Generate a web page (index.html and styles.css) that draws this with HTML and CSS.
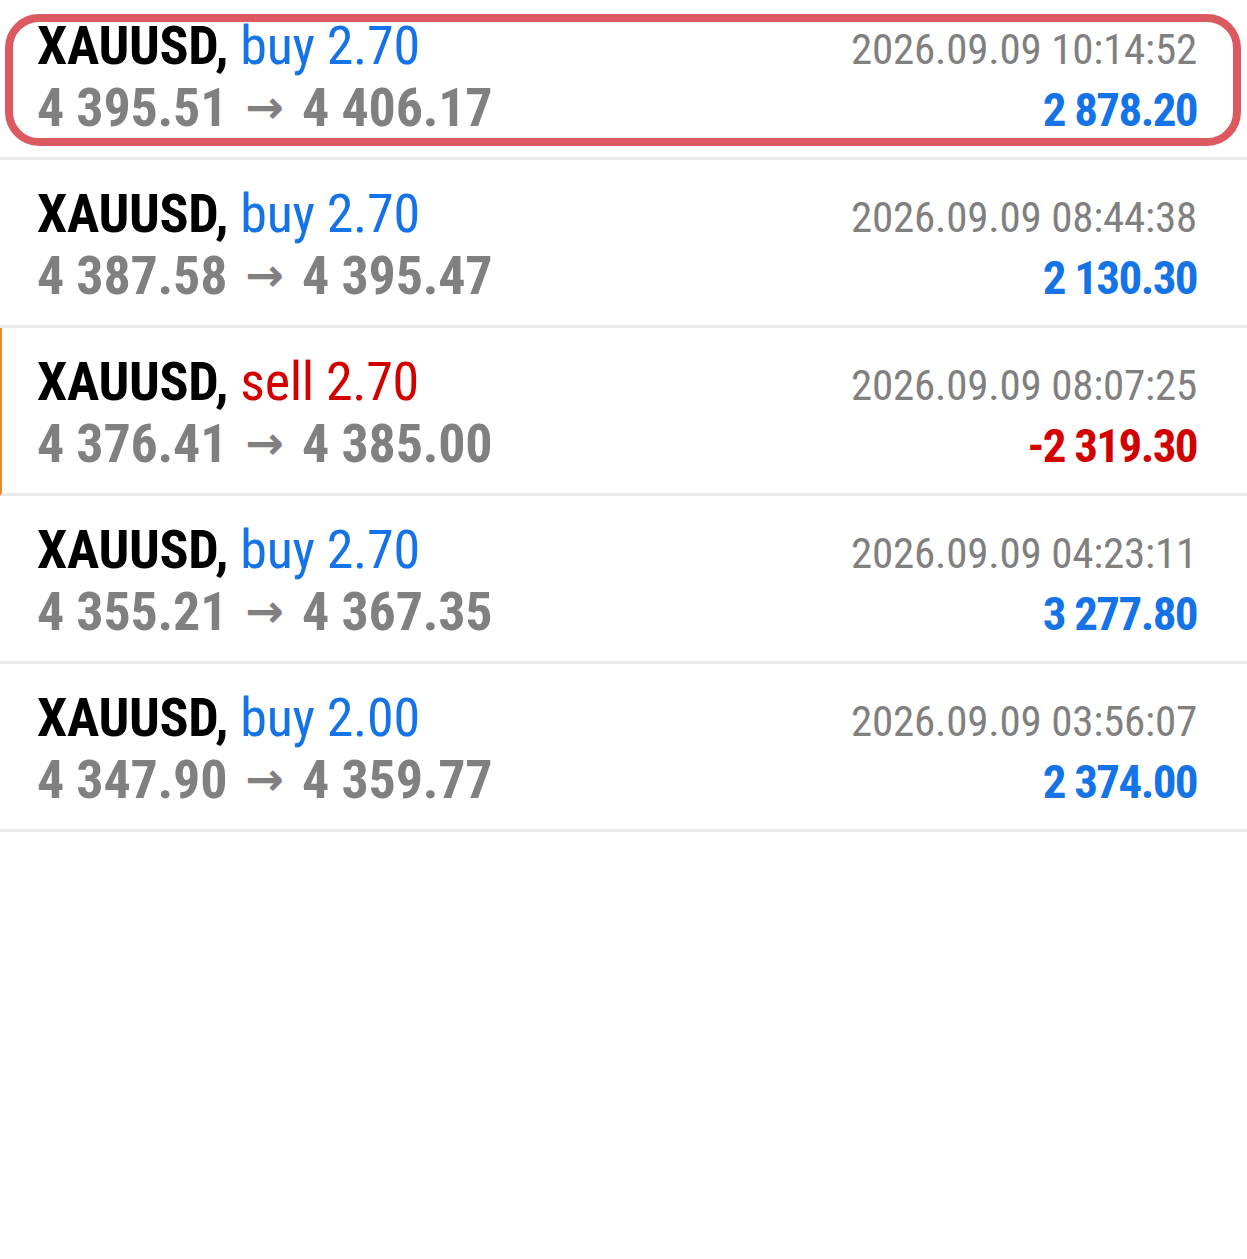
FILE: index.html
```html
<!DOCTYPE html>
<html lang="en">
<head>
    <meta charset="UTF-8">
    <meta name="viewport" content="width=device-width, initial-scale=1.0">
    <title>History</title>
    <link rel="stylesheet" href="styles.css">
</head>
<body>
    <ul class="deals">
        <li class="deal">
            <div class="deal-line">
                <span class="title"><span class="symbol">XAUUSD,</span> <span class="buy">buy 2.70</span></span>
                <span class="time">2026.09.09 10:14:52</span>
            </div>
            <div class="deal-line">
                <span class="prices">4 395.51 <span class="arrow">→</span> 4 406.17</span>
                <span class="profit buy">2 878.20</span>
            </div>
            <div class="highlight"></div>
        </li>
        <li class="deal">
            <div class="deal-line">
                <span class="title"><span class="symbol">XAUUSD,</span> <span class="buy">buy 2.70</span></span>
                <span class="time">2026.09.09 08:44:38</span>
            </div>
            <div class="deal-line">
                <span class="prices">4 387.58 <span class="arrow">→</span> 4 395.47</span>
                <span class="profit buy">2 130.30</span>
            </div>
        </li>
        <li class="deal marked">
            <div class="deal-line">
                <span class="title"><span class="symbol">XAUUSD,</span> <span class="sell">sell 2.70</span></span>
                <span class="time">2026.09.09 08:07:25</span>
            </div>
            <div class="deal-line">
                <span class="prices">4 376.41 <span class="arrow">→</span> 4 385.00</span>
                <span class="profit sell">-2 319.30</span>
            </div>
        </li>
        <li class="deal">
            <div class="deal-line">
                <span class="title"><span class="symbol">XAUUSD,</span> <span class="buy">buy 2.70</span></span>
                <span class="time">2026.09.09 04:23:11</span>
            </div>
            <div class="deal-line">
                <span class="prices">4 355.21 <span class="arrow">→</span> 4 367.35</span>
                <span class="profit buy">3 277.80</span>
            </div>
        </li>
        <li class="deal">
            <div class="deal-line">
                <span class="title"><span class="symbol">XAUUSD,</span> <span class="buy">buy 2.00</span></span>
                <span class="time">2026.09.09 03:56:07</span>
            </div>
            <div class="deal-line">
                <span class="prices">4 347.90 <span class="arrow">→</span> 4 359.77</span>
                <span class="profit buy">2 374.00</span>
            </div>
        </li>
    </ul>
</body>
</html>
```
FILE: styles.css
```css
body {
    margin: 0;
    background-color: #fff;
    font-family: "Roboto Condensed", Roboto, sans-serif;
    color: #808080;
}
.deals {
    list-style: none;
    margin: -8px 0 0;
    padding: 0;
}
.deal {
    position: relative;
    box-sizing: border-box;
    height: 168px;
    padding: 24px 50px 0 37px;
    border-bottom: 3px solid #e9e9e9;
}
.deal.marked {
    border-left: 2px solid #e8892c;
    padding-left: 35px;
}
.deal-line {
    display: flex;
    justify-content: space-between;
    align-items: baseline;
    line-height: 60px;
    white-space: nowrap;
}
.deal-line + .deal-line {
    margin-top: -2px;
}
.title {
    font-size: 54px;
    letter-spacing: -0.3px;
}
.symbol {
    font-weight: bold;
    color: #000;
}
.buy {
    color: #1473e6;
}
.sell {
    color: #d30000;
}
.time {
    font-size: 43px;
    letter-spacing: -0.2px;
}
.prices {
    font-size: 54px;
    font-weight: bold;
    letter-spacing: -0.2px;
}
.arrow {
    display: inline-block;
    margin: 0 6px;
    font-family: "DejaVu Sans", sans-serif;
    font-size: 46px;
    vertical-align: 3px;
}
.profit {
    font-size: 47px;
    font-weight: bold;
    letter-spacing: -1.6px;
}
.highlight {
    position: absolute;
    left: 5px;
    right: 6px;
    top: 22px;
    height: 132px;
    box-sizing: border-box;
    border: 8px solid #dc5a5f;
    border-radius: 34px;
}
```
